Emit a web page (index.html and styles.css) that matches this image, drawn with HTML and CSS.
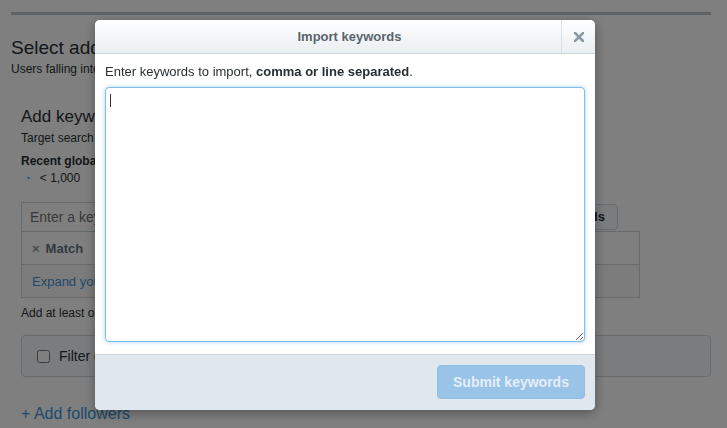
FILE: index.html
```html
<!DOCTYPE html>
<html>
<head>
  <title>Import keywords</title>
  <link rel="stylesheet" href="styles.css">
</head>
<body>
  <div class="page">
    <div class="topline"></div>
    <h1 class="page-title">Select additional targeting</h1>
    <p class="page-sub">Users falling into any of the criteria below will be targeted.</p>

    <section class="kw">
      <h2 class="kw-title">Add keywords</h2>
      <p class="kw-sub">Target search queries, recent Tweets and Tweets users engaged with.</p>
      <p class="kw-vol-label">Recent global volume</p>
      <ul class="kw-vol">
        <li>&lt; 1,000</li>
      </ul>
      <div class="kw-entry">
        <input type="text" class="kw-input" placeholder="Enter a keyword or phrase">
        <button class="kw-import">Import keywords</button>
      </div>
      <div class="kw-table">
        <div class="kw-row kw-head"><span class="kw-x">&times;</span> Match</div>
        <div class="kw-row kw-foot"><a href="#">Expand your reach with keyword suggestions</a></div>
      </div>
      <p class="kw-hint">Add at least one keyword to continue.</p>
      <label class="filter-box">
        <input type="checkbox" class="filter-check">
        <span>Filter out users who have already engaged</span>
      </label>
      <a href="#" class="add-followers">+ Add followers</a>
    </section>
  </div>

  <div class="overlay"></div>

  <div class="modal">
    <div class="modal-header">
      <h3 class="modal-title">Import keywords</h3>
      <button class="modal-close" aria-label="Close">
        <svg width="10" height="10" viewBox="0 0 10 10">
          <path d="M1 1 L9 9 M9 1 L1 9" stroke="#8899a6" stroke-width="2.6" stroke-linecap="square"/>
        </svg>
      </button>
    </div>
    <div class="modal-body">
      <p class="modal-text">Enter keywords to import, <b>comma or line separated</b>.</p>
      <textarea class="modal-textarea" autofocus></textarea>
      <span class="caret"></span>
    </div>
    <div class="modal-footer">
      <button class="submit-btn" disabled>Submit keywords</button>
    </div>
  </div>
</body>
</html>
```

FILE: styles.css
```css
body {
  margin: 0;
  padding: 0;
  background: #fff;
  font-family: 'Liberation Sans', Arial, sans-serif;
  color: #292f33;
  overflow: hidden;
}
.page {
  width: 700px;
  margin-left: 11px;
  padding-top: 12px;
}
.topline {
  height: 3px;
  background: #bfc7cd;
}
.page-title {
  margin: 22px 0 0;
  font-size: 19px;
  line-height: 22px;
  font-weight: normal;
}
.page-sub {
  margin: 2px 0 0;
  font-size: 12px;
  line-height: 16px;
}
.kw {
  padding-left: 10px;
}
.kw-title {
  margin: 30px 0 0;
  font-size: 17px;
  line-height: 20px;
  font-weight: normal;
}
.kw-sub {
  margin: 3px 0 0;
  font-size: 12px;
  line-height: 16px;
}
.kw-vol-label {
  margin: 7px 0 0;
  font-size: 12px;
  line-height: 16px;
  font-weight: bold;
}
.kw-vol {
  margin: 1px 0 0;
  padding-left: 6px;
  font-size: 12px;
  line-height: 16px;
  list-style: none;
}
.kw-vol li::before {
  content: '\2022';
  color: #3b94d9;
  font-size: 8px;
  margin-right: 10px;
  vertical-align: 2px;
}
.kw-entry {
  display: flex;
  align-items: center;
  gap: 5px;
  width: 597px;
  margin-top: 16px;
}
.kw-input {
  flex: 1;
  box-sizing: border-box;
  height: 29px;
  padding: 0 8px;
  border: 1px solid #ccd6dd;
  border-bottom: none;
  font: 14px 'Liberation Sans', Arial, sans-serif;
  color: #292f33;
}
.kw-import {
  height: 26px;
  padding: 0 12px;
  border: 1px solid #ccd6dd;
  border-radius: 4px;
  background: #f5f8fa;
  font: bold 13px 'Liberation Sans', Arial, sans-serif;
  color: #292f33;
}
.kw-table {
  width: 619px;
  box-sizing: border-box;
  border: 1px solid #ccd6dd;
}
.kw-row {
  height: 32px;
  padding-left: 10px;
  display: flex;
  align-items: center;
  font-size: 13px;
}
.kw-head {
  border-bottom: 1px solid #ccd6dd;
  font-weight: bold;
  color: #66757f;
}
.kw-x {
  margin-right: 6px;
  color: #8899a6;
}
.kw-foot {
  background: #fbf9f9;
}
.kw-foot a,
.add-followers {
  color: #3b94d9;
  text-decoration: none;
}
.kw-hint {
  margin: 7px 0 0;
  font-size: 12px;
  line-height: 16px;
}
.filter-box {
  display: flex;
  align-items: center;
  gap: 9px;
  box-sizing: border-box;
  width: 690px;
  height: 42px;
  margin-top: 14px;
  padding-left: 15px;
  border: 1px solid #ccd6dd;
  border-radius: 4px;
  background: #f5f8fa;
  font-size: 14px;
}
.filter-check {
  width: 13px;
  height: 13px;
  margin: 0;
}
.add-followers {
  display: block;
  margin-top: 27px;
  font-size: 16px;
  line-height: 20px;
}

.overlay {
  position: fixed;
  top: 0;
  left: 0;
  right: 0;
  bottom: 0;
  background: rgba(0, 0, 0, 0.5);
}
.modal {
  position: fixed;
  top: 20px;
  left: 95px;
  width: 500px;
  background: #fff;
  border-radius: 5px;
  box-shadow: 0 3px 12px rgba(0, 0, 0, 0.35);
  overflow: hidden;
}
.modal-header {
  position: relative;
  height: 33px;
  border-bottom: 1px solid #ccd6dd;
  background: linear-gradient(to bottom, #ffffff, #e9eef2);
}
.modal-title {
  margin: 0;
  padding-left: 9px;
  font-size: 13px;
  line-height: 33px;
  font-weight: bold;
  text-align: center;
  color: #5a646c;
}
.modal-close {
  position: absolute;
  top: 0;
  right: 0;
  width: 34px;
  height: 33px;
  padding: 0;
  border: none;
  border-left: 1px solid #d9e0e5;
  background: transparent;
  display: flex;
  align-items: center;
  justify-content: center;
}
.modal-body {
  position: relative;
  padding: 9px 10px 12px;
}
.modal-text {
  margin: 0 0 6px;
  font-size: 13px;
  line-height: 18px;
  color: #292f33;
}
.modal-textarea {
  display: block;
  box-sizing: border-box;
  width: 480px;
  height: 255px;
  margin: 0;
  padding: 6px 4px;
  border: 1px solid #7dbcec;
  border-radius: 4px;
  outline: none;
  box-shadow: 0 0 4px rgba(102, 175, 233, 0.55);
  font: 13px 'Liberation Sans', Arial, sans-serif;
  color: #292f33;
}
.caret {
  position: absolute;
  left: 15px;
  top: 40px;
  width: 1px;
  height: 13px;
  background: #333;
}
.modal-footer {
  display: flex;
  justify-content: flex-end;
  padding: 10px 10px 11px;
  border-top: 1px solid #ccd6dd;
  background: #e1e8ed;
}
.submit-btn {
  box-sizing: border-box;
  width: 148px;
  height: 34px;
  padding: 0;
  border: 1px solid #8fbde4;
  border-radius: 4px;
  background: #9ac4e7;
  font: bold 14px 'Liberation Sans', Arial, sans-serif;
  color: #e4eff9;
}
```
